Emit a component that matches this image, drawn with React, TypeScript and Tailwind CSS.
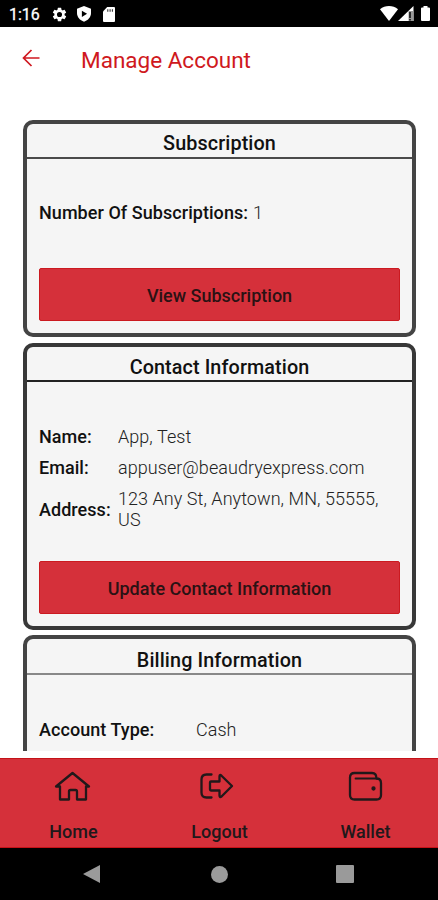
import type { ReactNode } from 'react';

function StatusBar() {
    return (
        <div className="flex h-[27px] shrink-0 items-center justify-between bg-black pl-[9px] pr-[8px] text-white">
            <div className="flex items-center pt-px">
                <span className="w-[42px] pt-px text-[16px] leading-[26px] [-webkit-text-stroke:0.3px_white]">1:16</span>
                <svg width="17" height="17" viewBox="0 0 24 24" fill="currentColor">
                    <path d="M19.14 12.94c.04-.3.06-.61.06-.94s-.02-.64-.07-.94l2.03-1.58a.49.49 0 0 0 .12-.61l-1.92-3.32a.49.49 0 0 0-.59-.22l-2.39.96a7 7 0 0 0-1.62-.94l-.36-2.54a.48.48 0 0 0-.48-.41h-3.84a.48.48 0 0 0-.47.41l-.36 2.54a7 7 0 0 0-1.62.94l-2.39-.96a.48.48 0 0 0-.59.22L2.74 8.87a.48.48 0 0 0 .12.61l2.03 1.58a7 7 0 0 0 0 1.88l-2.03 1.58a.49.49 0 0 0-.12.61l1.92 3.32c.12.22.37.29.59.22l2.39-.96c.5.38 1.03.7 1.62.94l.36 2.54c.05.24.24.41.48.41h3.84c.24 0 .44-.17.47-.41l.36-2.54a7 7 0 0 0 1.62-.94l2.39.96c.22.08.47 0 .59-.22l1.92-3.32a.48.48 0 0 0-.12-.61zM12 15.6a3.6 3.6 0 1 1 0-7.2 3.6 3.6 0 0 1 0 7.2z" />
                </svg>
                <svg className="ml-[9px]" width="14" height="16" viewBox="0 0 15 17">
                    <path d="M7.5 0 15 2.8V7.5c0 4.3-3 7.9-7.5 9.2C3 15.4 0 11.8 0 7.5V2.8z" fill="currentColor" />
                    <path d="M5.2 4.9v6.8l5.6-3.400z" fill="#000" />
                </svg>
                <svg className="ml-[12px]" width="12" height="15" viewBox="0 0 12 15">
                    <path d="M4.2 0H11a1 1 0 0 1 1 1v13a1 1 0 0 1-1 1H1a1 1 0 0 1-1-1V4.600z" fill="currentColor" />
                    <path d="M4.8 2.300v2.500M7.100 2.300v2.500M9.400 2.300v2.500" stroke="#333" strokeWidth="1.1" />
                </svg>
            </div>
            <div className="flex items-center">
                <svg width="18" height="15" viewBox="0 0 18 15" fill="currentColor">
                    <path d="M0 3.2C5 -1 13 -1 18 3.200L9 15z" />
                </svg>
                <svg width="16" height="15" viewBox="0 0 16 15">
                    <path d="M0 15 15.5 0v15z" fill="currentColor" />
                    <path d="M10.5 5h5V15h-5z" fill="#999" />
                    <path d="M12 6v6M12 13v1.5" stroke="#111" strokeWidth="1.6" />
                </svg>
                <svg className="ml-[7px]" width="9" height="15" viewBox="0 0 9 15" fill="currentColor">
                    <path d="M2.5 0h4v1.500H8a1 1 0 0 1 1 1V14a1 1 0 0 1-1 1H1a1 1 0 0 1-1-1V2.500a1 1 0 0 1 1-1h1.500z" />
                </svg>
            </div>
        </div>
    );
}

function Card({ title, className, line, children }: { title: string; className: string; line: string; children: ReactNode }) {
    return (
        <section className={`flex shrink-0 flex-col rounded-[10px] border-4 bg-[#f5f5f5] ${className}`}>
            <h2 className={`shrink-0 border-b-2 text-center text-[19.8px] font-medium tracking-[0.1px] text-[#111] ${line}`}>
                {title}
            </h2>
            <div className="flex flex-1 flex-col px-3 pb-3">{children}</div>
        </section>
    );
}

function Button({ children }: { children: ReactNode }) {
    return (
        <button className="mt-auto h-[53px] w-full shrink-0 rounded-[2px] border border-[#cb1a20] bg-[#d5303a] pt-px text-[18px] font-medium text-[#2a1214]">
            {children}
        </button>
    );
}

function Row({ label, value, labelWidth }: { label: string; value: string; labelWidth: string }) {
    return (
        <div className="flex items-center text-[18px] leading-[21px]">
            <span className={`shrink-0 font-medium tracking-[0.05px] text-[#111] ${labelWidth}`}>{label}</span>
            <span className="font-light tracking-[0.05px] text-[#222]">{value}</span>
        </div>
    );
}

const tabs = [
    {
        label: 'Home',
        icon: (
            <svg width="38" height="30" viewBox="0 0 38 30" fill="none" stroke="currentColor" strokeWidth="2.3" strokeLinejoin="round" strokeLinecap="round">
                <path d="M2 15.5 18.500 2 35 15.500H32V28.500H23V20.500Q23 19 21.500 19H16.500Q15 19 15 20.500V28.500H6V15.500z" />
            </svg>
        ),
    },
    {
        label: 'Logout',
        icon: (
            <svg className="-ml-[4px]" width="36" height="30" viewBox="0 0 36 30" fill="none" stroke="currentColor" strokeWidth="2.3" strokeLinejoin="round" strokeLinecap="round">
                <path d="M12.5 3.500H7.500Q2.500 3.500 2.500 8.500V21.500Q2.500 26.500 7.500 26.500H12.500" />
                <path d="M12 10.500H20.500V5.500Q20.500 3 22.500 4.700L33 15 22.500 25.500Q20.500 27 20.500 24.500V19.500H12Q11 19.500 11 18.500V11.500Q11 10.500 12 10.500z" />
            </svg>
        ),
    },
    {
        label: 'Wallet',
        icon: (
            <svg className="ml-px" width="35" height="30" viewBox="0 0 35 30" fill="none" stroke="currentColor" strokeWidth="2.3" strokeLinejoin="round" strokeLinecap="round">
                <path d="M28.5 7.500Q33 7.500 33 12V24Q33 28.500 28.500 28.500H6.500Q2 28.500 2 24V6.500Q2 2 6.500 2H24Q28.500 2 28.500 7.500z" />
                <path d="M7.500 7.500H28.500" strokeWidth="1.8" />
                <circle cx="25.5" cy="17.5" r="1" fill="currentColor" />
            </svg>
        ),
    },
];

export default function App() {
    return (
        <div className="flex h-[900px] w-[438px] flex-col overflow-hidden bg-white font-['Roboto','Liberation_Sans',sans-serif]">
            <StatusBar />
            <header className="flex h-[93px] shrink-0 items-start pl-[22px] pt-[16px] text-[#cf1820]">
                <svg className="mt-[6px]" width="18" height="18" viewBox="0 0 18 18" fill="none" stroke="currentColor" strokeWidth="1.7">
                    <path d="M17.5 9H1.500M9.500 1 1.500 9l8 8" />
                </svg>
                <h1 className="ml-[41px] text-[22.5px] leading-[34px]">Manage Account</h1>
            </header>

            <main className="flex h-[631px] shrink-0 flex-col overflow-hidden pl-[23px] pr-[22px]">
                <Card title="Subscription" className="h-[217px] border-[#444]" line="h-[35px] leading-[40px] border-[#4a4a4a]">
                    <div className="pt-[43px]">
                        <Row label="Number Of Subscriptions:" value="1" labelWidth="w-[214px]" />
                    </div>
                    <Button>View Subscription</Button>
                </Card>
                <Card title="Contact Information" className="mt-[6px] h-[287px] border-[#383838]" line="h-[35px] leading-[42px] border-[#222]">
                    <div className="flex flex-col gap-[10px] pt-[44px]">
                        <Row label="Name:" value="App, Test" labelWidth="w-[79px]" />
                        <Row label="Email:" value="appuser@beaudryexpress.com" labelWidth="w-[79px]" />
                        <Row label="Address:" value="123 Any St, Anytown, MN, 55555, US" labelWidth="w-[79px]" />
                    </div>
                    <Button>Update Contact Information</Button>
                </Card>
                <Card title="Billing Information" className="mt-[5px] h-[217px] border-[#444]" line="h-[36px] leading-[44px] border-[#888]">
                    <div className="pt-[44px]">
                        <Row label="Account Type:" value="Cash" labelWidth="w-[157px]" />
                    </div>
                </Card>
            </main>

            <nav className="mt-[7px] flex h-[90px] shrink-0 border-y border-[#c41218] bg-[#d5303a] text-[#21181a]">
                {tabs.map((tab) => (
                    <div key={tab.label} className="flex w-[146px] flex-col items-center pt-[12px]">
                        {tab.icon}
                        <span className="ml-px mt-[19px] text-[18px] font-medium leading-[24px]">{tab.label}</span>
                    </div>
                ))}
            </nav>

            <div className="flex flex-1 items-center bg-black pl-[83px] text-[#9a9a9a]">
                <svg width="18" height="18" viewBox="0 0 18 18" fill="currentColor">
                    <path d="M0 9 17 0v18z" />
                </svg>
                <span className="ml-[110px] size-[17px] rounded-full bg-[#9a9a9a]" />
                <span className="ml-[108px] size-[18px] rounded-[1px] bg-[#9a9a9a]" />
            </div>
        </div>
    );
}
